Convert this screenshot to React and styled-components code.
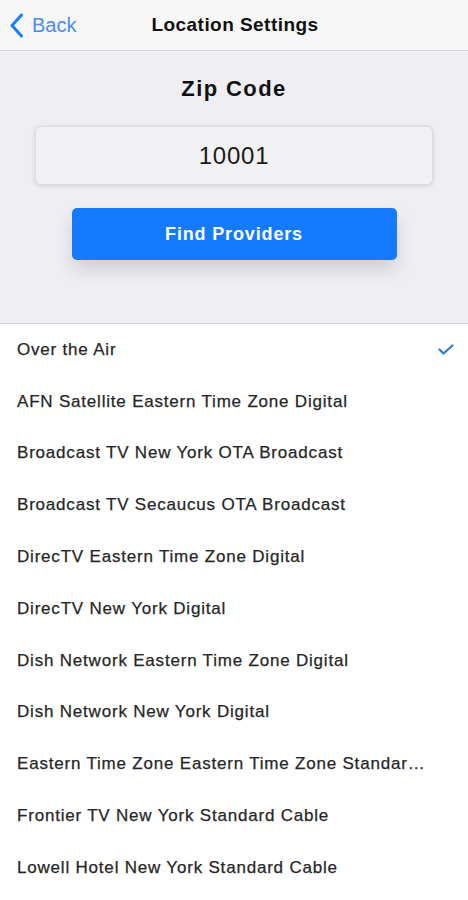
import React from "react";
import styled, { createGlobalStyle } from "styled-components";

const GlobalStyle = createGlobalStyle`
  html, body {
    margin: 0;
    padding: 0;
    background: #ffffff;
  }
  body {
    font-family: "Liberation Sans", Arial, sans-serif;
    -webkit-font-smoothing: antialiased;
  }
`;

const providers = [
  "Over the Air",
  "AFN Satellite Eastern Time Zone Digital",
  "Broadcast TV New York OTA Broadcast",
  "Broadcast TV Secaucus OTA Broadcast",
  "DirecTV Eastern Time Zone Digital",
  "DirecTV New York Digital",
  "Dish Network Eastern Time Zone Digital",
  "Dish Network New York Digital",
  "Eastern Time Zone Eastern Time Zone Standard Cable",
  "Frontier TV New York Standard Cable",
  "Lowell Hotel New York Standard Cable",
];

export default function App() {
  return (
    <Screen>
      <GlobalStyle />
      <NavBar>
        <BackButton>
          <svg width="15" height="25" viewBox="0 0 15 25">
            <path
              d="M12.5 2 L3 12.5 L12.5 23"
              fill="none"
              stroke="#1c7cf4"
              strokeWidth="3"
              strokeLinecap="round"
              strokeLinejoin="round"
            />
          </svg>
          <span>Back</span>
        </BackButton>
        <NavTitle>Location Settings</NavTitle>
      </NavBar>

      <Header>
        <ZipLabel>Zip Code</ZipLabel>
        <ZipInput>10001</ZipInput>
        <FindButton>Find Providers</FindButton>
      </Header>

      <List>
        {providers.map((name, i) => (
          <Row key={name}>
            <RowText>{name}</RowText>
            {i === 0 && (
              <Check width="16" height="11" viewBox="0 0 16 11">
                <path
                  d="M1.5 5.5 L5.5 9.5 L14.5 1.5"
                  fill="none"
                  stroke="#2a78e4"
                  strokeWidth="2.2"
                  strokeLinecap="round"
                  strokeLinejoin="round"
                />
              </Check>
            )}
          </Row>
        ))}
      </List>
    </Screen>
  );
}

const Screen = styled.div`
  width: 468px;
  min-height: 900px;
  background: #ffffff;
  display: flex;
  flex-direction: column;
`;

const NavBar = styled.div`
  position: relative;
  height: 50px;
  background: #f7f7f7;
  border-bottom: 1px solid #d6d6da;
  display: flex;
  align-items: center;
  justify-content: center;
`;

const BackButton = styled.div`
  position: absolute;
  left: 9px;
  top: 0;
  bottom: 0;
  display: flex;
  align-items: center;
  gap: 8px;
  span {
    color: #4b8ce8;
    font-size: 20px;
  }
`;

const NavTitle = styled.div`
  font-size: 19px;
  font-weight: 700;
  letter-spacing: 0.45px;
  color: #111111;
  margin-left: 2px;
`;

const Header = styled.div`
  background: #efeff3;
  border-bottom: 1px solid #d4d4d8;
  height: 273px;
  box-sizing: border-box;
  display: flex;
  flex-direction: column;
  align-items: center;
  padding-top: 25px;
`;

const ZipLabel = styled.div`
  font-size: 22px;
  font-weight: 700;
  letter-spacing: 1.4px;
  color: #111111;
  line-height: 26px;
`;

const ZipInput = styled.div`
  margin-top: 24px;
  width: 398px;
  height: 59px;
  box-sizing: border-box;
  border-radius: 6px;
  background: #f1f1f4;
  border: 1px solid #dcdce0;
  box-shadow: 0 1px 5px rgba(0, 0, 0, 0.12);
  display: flex;
  align-items: center;
  justify-content: center;
  font-size: 24px;
  letter-spacing: 0.8px;
  color: #1a1a1a;
`;

const FindButton = styled.div`
  margin-top: 23px;
  width: 325px;
  height: 52px;
  border-radius: 5px;
  background: #157afe;
  box-shadow: 0 10px 18px rgba(0, 0, 0, 0.13);
  display: flex;
  align-items: center;
  justify-content: center;
  color: #ffffff;
  font-size: 18px;
  font-weight: 700;
  letter-spacing: 0.85px;
`;

const List = styled.div`
  display: flex;
  flex-direction: column;
`;

const Row = styled.div`
  height: 51.8px;
  display: flex;
  align-items: center;
  padding: 0 14px 0 17px;
  gap: 12px;
`;

const RowText = styled.div`
  flex: 1;
  min-width: 0;
  max-width: 414px;
  font-size: 17px;
  letter-spacing: 0.8px;
  color: #262626;
  -webkit-text-stroke: 0.25px #262626;
  white-space: nowrap;
  overflow: hidden;
  text-overflow: ellipsis;
`;

const Check = styled.svg`
  flex-shrink: 0;
`;
